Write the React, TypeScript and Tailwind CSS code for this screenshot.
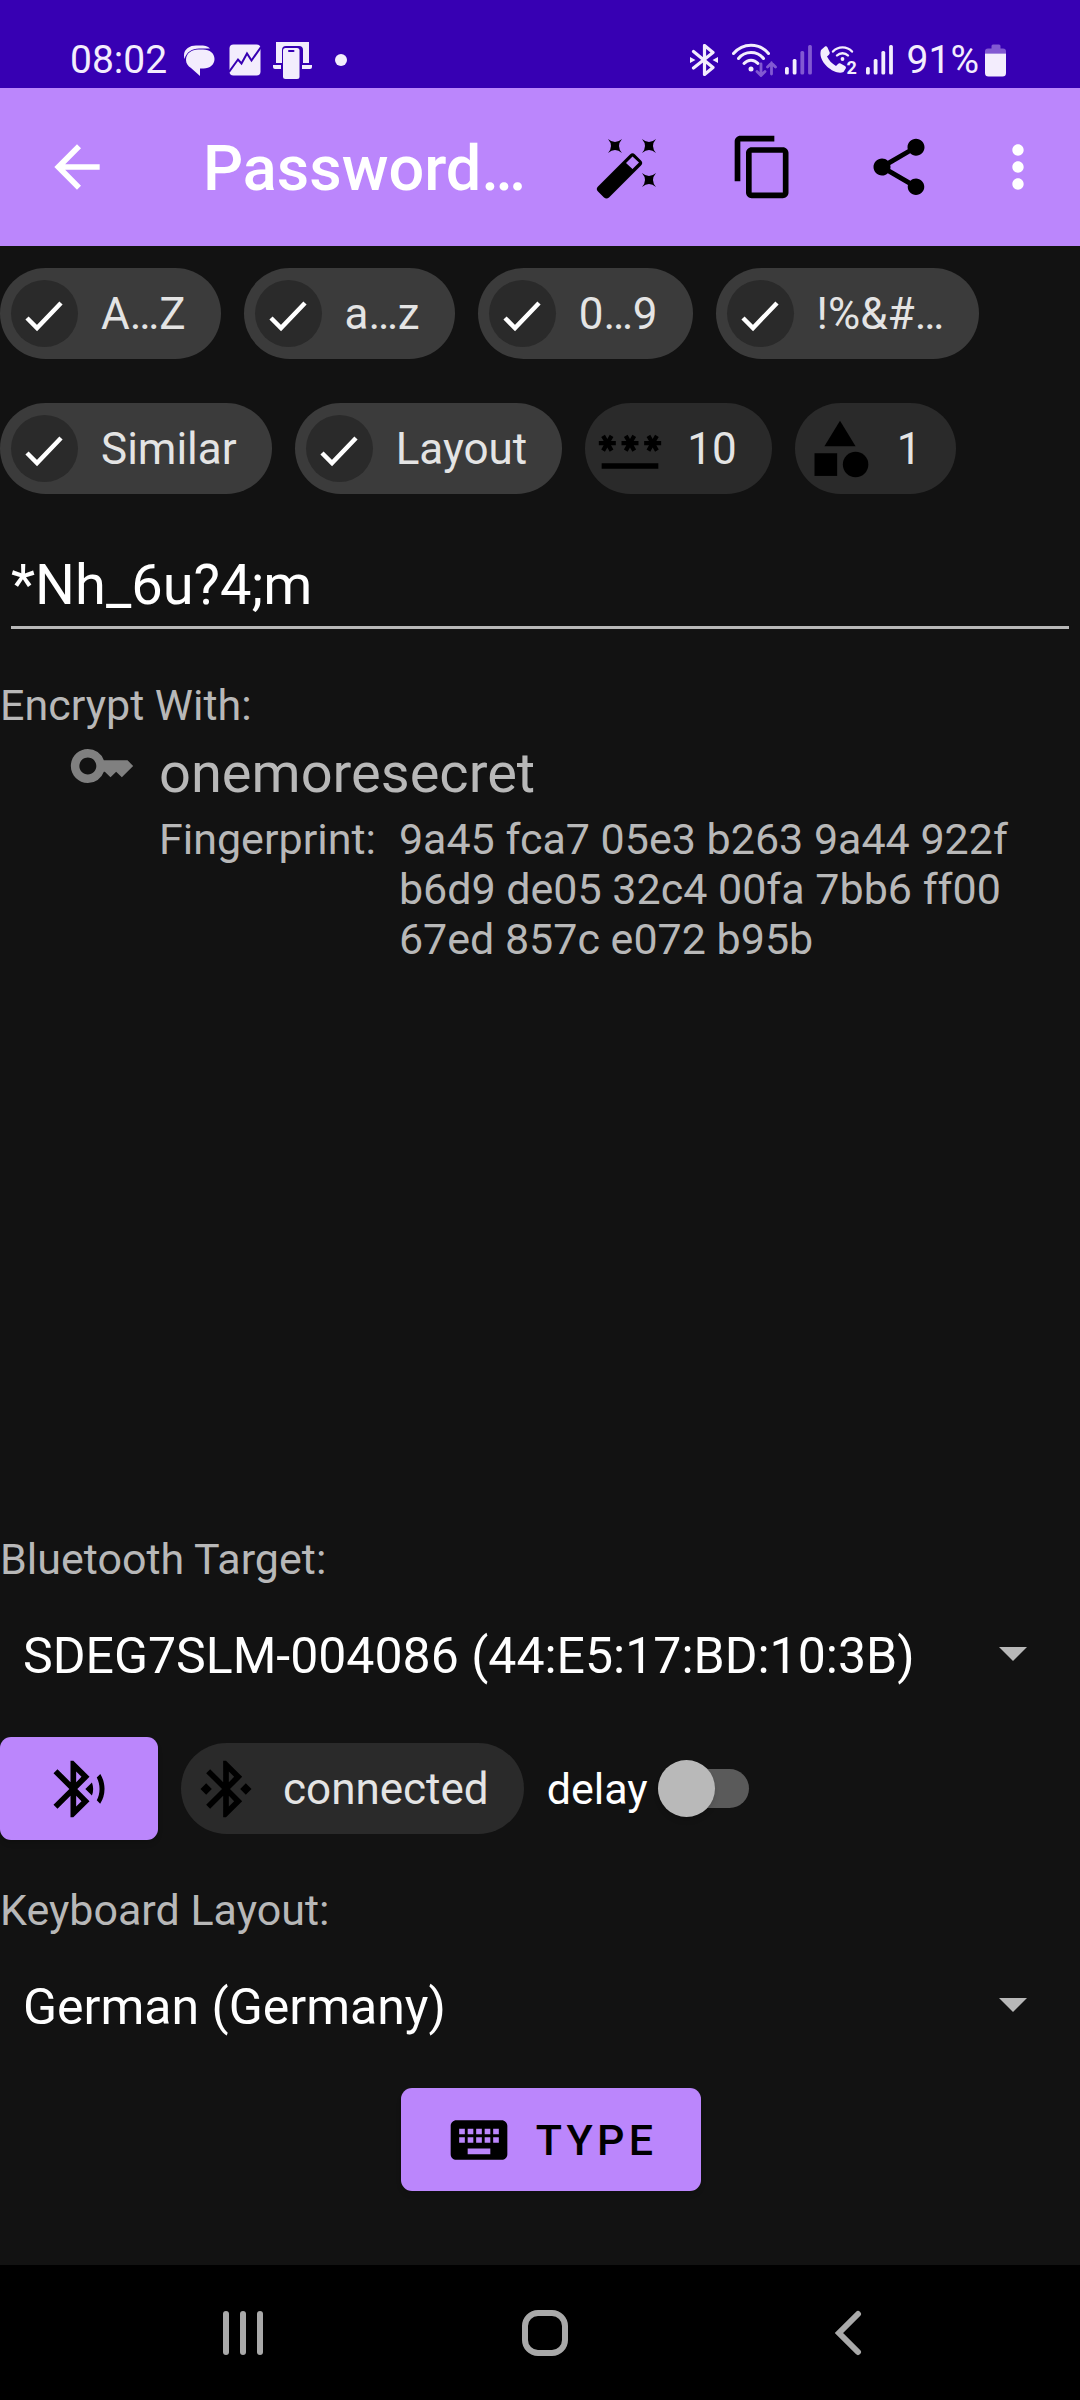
import { useState } from "react";
import type { ReactNode } from "react";
import {
  MdArrowBack,
  MdBluetoothConnected,
  MdBluetoothSearching,
  MdCategory,
  MdContentCopy,
  MdKey,
  MdKeyboard,
  MdMoreVert,
  MdPassword,
  MdShare,
} from "react-icons/md";

const LIGHT = "#f3edfd";
const FADED = "#8259d2";

function SignalBars({ level }: { level: number }) {
  const tops = [22, 14, 6, 0];
  return (
    <svg width="27" height="30" viewBox="0 0 27 30" aria-hidden="true">
      {tops.map((top, i) => (
        <rect
          key={top}
          x={i * 7.7}
          y={top}
          width="3.8"
          height={29.5 - top}
          rx="1.5"
          fill={i < level ? LIGHT : FADED}
        />
      ))}
    </svg>
  );
}

function StatusBar() {
  return (
    <header className="flex h-[88px] items-end justify-between bg-[#3700b3] pr-[73px] pb-[5px] pl-[70px] text-[#f3edfd]">
      <div className="flex items-center">
        <span className="text-[39px] leading-[46px]">08:02</span>
        <svg className="ml-4" width="32" height="32" viewBox="0 0 32 32" aria-hidden="true">
          <path d="M1.500 15C-1 6 6 1.500 13 1.500h4c4 0 8 0.500 10 3H16C9 4.500 3.500 8 1.500 15Z" fill={LIGHT} />
          <path d="M3 16C3 9 9 5.500 15 5.500h5C27 5.500 31.500 9.500 31.500 15S27 24.500 20.500 24.500H17V32L8 24C5 22 3 19.500 3 16Z" fill={LIGHT} />
        </svg>
        <svg className="ml-3.5" width="32" height="32" viewBox="0 0 32 32" aria-hidden="true">
          <rect x="0.500" y="0.500" width="31" height="31" rx="4" fill={LIGHT} />
          <path d="M0 28L9 15.500l3.500 4L18 9.500l4.500 7L32 3" fill="none" stroke="#3700b3" strokeWidth="2" />
        </svg>
        <svg className="ml-3" width="39" height="38" viewBox="0 0 39 38" aria-hidden="true">
          <path d="M3 1h33v21h-6V9a4 4 0 0 0-4-4H13a4 4 0 0 0-4 4v13H3Z" fill={LIGHT} />
          <path d="M0 24h8v4H2a2 2 0 0 1-2-2ZM29 24h10v2a2 2 0 0 1-2 2h-8Z" fill={LIGHT} />
          <rect x="10" y="7" width="16.500" height="31" rx="2.500" fill={LIGHT} />
          <rect x="15" y="9" width="6.500" height="2" rx="1" fill="#3700b3" />
        </svg>
        <span className="ml-[23px] size-3 rounded-full bg-[#f3edfd]" />
      </div>
      <div className="flex items-center">
        <svg width="28" height="32" viewBox="0 0 28 32" aria-hidden="true">
          <path d="M3.500 7.500L23 23.500l-8.500 7V1.500l8.500 7L3.500 24" fill="none" stroke={LIGHT} strokeWidth="3.200" strokeLinejoin="round" strokeLinecap="round" />
          <path d="M0 13l5.500 3L0 19ZM28 13l-5.500 3 5.500 3Z" fill={LIGHT} />
        </svg>
        <svg className="ml-3.5" width="45" height="34" viewBox="0 0 45 34" aria-hidden="true">
          <g fill="none" stroke={LIGHT} strokeWidth="3" strokeLinecap="round">
            <path d="M1.500 10.500C11 -0.500 27 -0.500 36.500 10.500" />
            <path d="M6.500 15.500C13 7.500 25 7.500 31.500 15.500" />
            <path d="M12 20.500C16 16 22 16 26 20.500" />
          </g>
          <circle cx="19" cy="26" r="2.500" fill={LIGHT} />
          <path d="M29 21v11M25 28.500l4 4 4-4M39.500 31V20M35.500 24l4-4 4 4" fill="none" stroke={FADED} strokeWidth="2.800" strokeLinecap="round" />
        </svg>
        <div className="ml-2">
          <SignalBars level={2} />
        </div>
        <svg className="ml-2" width="40" height="42" viewBox="0 -6 40 42" aria-hidden="true">
          <path d="M1 5L5 1.500C6 1 7 1.500 7.500 2.500L9.500 7C10 8 9.800 9 9 9.700L7 11.500C9 15.500 12 18.700 16 21L18 19C18.700 18.300 19.600 18.200 20.500 18.600L25 21c1 .500 1.200 1.500.700 2.500L23.500 27C15 31-3 17 1 5Z" fill={LIGHT} />
          <g fill="none" stroke={LIGHT} strokeWidth="2.400" strokeLinecap="round">
            <path d="M13 6.500C18 1 27 1 32 6.500" />
            <path d="M17 10.500C20 7.500 25 7.500 28 10.500" />
          </g>
          <circle cx="22.500" cy="14" r="1.900" fill={LIGHT} />
          <text x="26.500" y="29" fill={LIGHT} fontFamily="Roboto, sans-serif" fontSize="18" fontWeight="700">2</text>
        </svg>
        <div className="ml-1.5">
          <SignalBars level={4} />
        </div>
        <span className="ml-3.5 text-[39px] leading-[46px]">91%</span>
        <svg className="ml-1.5" width="22" height="33" viewBox="0 0 22 33" aria-hidden="true">
          <path d="M0 9.500V7.500a3 3 0 0 1 3-3h3.500V2a1.500 1.500 0 0 1 1.500-1.500h6A1.500 1.500 0 0 1 15.500 2v2.500H18a3 3 0 0 1 3 3v2Z" fill={FADED} />
          <path d="M0 9.500h21V29a3.500 3.500 0 0 1-3.500 3.500h-14A3.500 3.500 0 0 1 0 29Z" fill={LIGHT} />
        </svg>
      </div>
    </header>
  );
}

function WandIcon() {
  const star = "M-7-7Q0-1 7-7Q1 0 7 7Q0 1-7 7Q-1 0-7-7Z";
  return (
    <svg width="68" height="68" viewBox="0 0 68 68" aria-hidden="true">
      <g transform="translate(22 13)"><path d={star} /></g>
      <g transform="translate(56 13)"><path d={star} /></g>
      <g transform="translate(56 47)"><path d={star} /></g>
      <path
        fillRule="evenodd"
        d="M5 53.500L37 21.500q2.500-2.500 5 0l6 6q2.500 2.500 0 5L16 64.500q-2.500 2-5 0l-6-6q-2.500-2.500 0-5ZM39.500 23.500l-6.500 6.500 6.500 6 6.500-6.500Z"
      />
    </svg>
  );
}

function AppBar() {
  return (
    <div className="flex h-[158px] items-center bg-[#bb86fc] pr-7 pl-[43px] text-black">
      <button type="button" aria-label="Back" className="text-white">
        <MdArrowBack size={68} />
      </button>
      <h1 className="ml-[92px] min-w-0 flex-1 truncate pt-1 text-[63px] leading-[74px] font-medium text-white">
        Password…
      </h1>
      <div className="flex items-center gap-[68px]">
        <button type="button" aria-label="Generate password"><WandIcon /></button>
        <button type="button" aria-label="Copy"><MdContentCopy size={68} /></button>
        <button type="button" aria-label="Share"><MdShare size={68} /></button>
      </div>
      <button type="button" aria-label="More options" className="ml-[51px] text-white">
        <MdMoreVert size={68} />
      </button>
    </div>
  );
}

function CheckChip({ label }: { label: string }) {
  const [on, setOn] = useState(true);
  return (
    <label className="relative flex h-[91px] items-center gap-[23px] rounded-full bg-[#3b3b3b] pr-[35px] pl-[11px] text-[44px] leading-[52px] text-[#e4e4e4]">
      <input type="checkbox" className="sr-only" checked={on} onChange={(e) => setOn(e.target.checked)} />
      <span className="size-[67px] rounded-full bg-[#2a2a2a]">
        {on && (
          <svg width="67" height="67" viewBox="0 0 67 67" aria-hidden="true">
            <path d="M16 38l10 10 24-25" fill="none" stroke="#fff" strokeWidth="4.500" />
          </svg>
        )}
      </span>
      {label}
    </label>
  );
}

function IconChip({ icon, label }: { icon: ReactNode; label: string }) {
  return (
    <button
      type="button"
      className="flex h-[91px] items-center gap-[23px] rounded-full bg-[#2a2a2a] pr-[35px] pl-[11px] text-[44px] leading-[52px] text-[#e4e4e4]"
    >
      <span className="text-black">{icon}</span>
      {label}
    </button>
  );
}

function Spinner({ id, label, options }: { id: string; label: string; options: string[] }) {
  return (
    <div>
      <label htmlFor={id} className="block text-[43px] leading-[50px] text-[#b8b8b8]">{label}</label>
      <div className="relative mt-[42px]">
        <select id={id} className="block h-[60px] w-full appearance-none bg-transparent pr-24 pl-[23px] text-[50px] leading-[60px] text-white">
          {options.map((o) => (
            <option key={o}>{o}</option>
          ))}
        </select>
        <svg className="pointer-events-none absolute top-[21px] right-[53px]" width="28" height="14" viewBox="0 0 28 14" aria-hidden="true">
          <path d="M0 0h28L14 14Z" fill="#b8b8b8" />
        </svg>
      </div>
    </div>
  );
}

function DelaySwitch() {
  const [on, setOn] = useState(false);
  return (
    <label className="relative flex items-center gap-2.5 text-[43px] leading-[50px] text-white">
      delay
      <input type="checkbox" role="switch" className="sr-only" checked={on} onChange={(e) => setOn(e.target.checked)} />
      <span className={on ? "flex h-[39px] w-[91px] items-center justify-end rounded-full bg-[#7a5ca3]" : "flex h-[39px] w-[91px] items-center rounded-full bg-[#5a5a5a]"}>
        <span className="size-[57px] shrink-0 rounded-full bg-[#b9b9b9] shadow-md" />
      </span>
    </label>
  );
}

export default function App() {
  return (
    <div className="flex min-h-screen flex-col bg-[#121212] font-['Roboto',sans-serif]">
      <StatusBar />
      <AppBar />
      <main className="flex flex-1 flex-col pb-[74px]">
        <div className="flex flex-wrap gap-[23px] pt-[22px]">
          <CheckChip label="A…Z" />
          <CheckChip label="a…z" />
          <CheckChip label="0…9" />
          <CheckChip label="!%&#…" />
        </div>
        <div className="flex flex-wrap gap-[23px] pt-11">
          <CheckChip label="Similar" />
          <CheckChip label="Layout" />
          <IconChip icon={<MdPassword size={68} />} label="10" />
          <IconChip icon={<MdCategory size={68} />} label="1" />
        </div>
        <input
          type="text"
          aria-label="Password"
          defaultValue="*Nh_6u?4;m"
          className="mx-[11px] mt-[58px] h-[77px] rounded-none border-b-[3px] border-[#b8b8b8] bg-transparent pb-2 text-[56px] leading-[66px] text-white outline-none"
        />
        <section className="mt-[51px] flex-1 text-[43px] leading-[50px] text-[#b8b8b8]">
          <h2>Encrypt With:</h2>
          <div className="flex gap-[23px] pl-[68px]">
            <MdKey size={68} className="mt-0.5 shrink-0 text-[#808080]" />
            <div className="min-w-0 flex-1 pt-2.5">
              <div className="text-[56px] leading-[66px]">onemoresecret</div>
              <dl className="mt-2 flex gap-[23px] pr-4">
                <dt>Fingerprint:</dt>
                <dd className="min-w-0 flex-1">9a45 fca7 05e3 b263 9a44 922f b6d9 de05 32c4 00fa 7bb6 ff00 67ed 857c e072 b95b</dd>
              </dl>
            </div>
          </div>
        </section>
        <Spinner id="target" label="Bluetooth Target:" options={["SDEG7SLM-004086 (44:E5:17:BD:10:3B)"]} />
        <div className="mt-[51px] mb-[45px] flex items-center gap-[23px]">
          <button type="button" aria-label="Search Bluetooth devices" className="flex h-[103px] w-[158px] items-center justify-center rounded-[11px] bg-[#bb86fc] text-black shadow-md">
            <MdBluetoothSearching size={68} />
          </button>
          <IconChip icon={<MdBluetoothConnected size={68} />} label="connected" />
          <DelaySwitch />
        </div>
        <Spinner id="layout" label="Keyboard Layout:" options={["German (Germany)"]} />
        <div className="mt-[51px] flex justify-center pl-[22px]">
          <button type="button" className="flex h-[103px] items-center gap-[23px] rounded-[11px] bg-[#bb86fc] px-11 text-[43px] leading-[50px] font-medium tracking-widest text-black shadow-md">
            <MdKeyboard size={68} />
            TYPE
          </button>
        </div>
      </main>
      <nav className="flex h-[135px] items-center justify-around bg-black pr-[82px] pl-[92px]">
        <button type="button" aria-label="Recent apps" className="flex h-11 w-[46px] justify-center gap-[11px]">
          <span className="w-1.5 rounded-full bg-[#a9a9a9]" />
          <span className="w-1.5 rounded-full bg-[#a9a9a9]" />
          <span className="w-1.5 rounded-full bg-[#a9a9a9]" />
        </button>
        <button type="button" aria-label="Home" className="size-[46px] rounded-2xl border-[6px] border-[#a9a9a9]" />
        <button type="button" aria-label="Navigate back">
          <svg width="46" height="46" viewBox="0 0 46 46" aria-hidden="true">
            <path d="M34 4L15 23l19 19" fill="none" stroke="#a9a9a9" strokeWidth="6" strokeLinecap="round" />
          </svg>
        </button>
      </nav>
    </div>
  );
}
